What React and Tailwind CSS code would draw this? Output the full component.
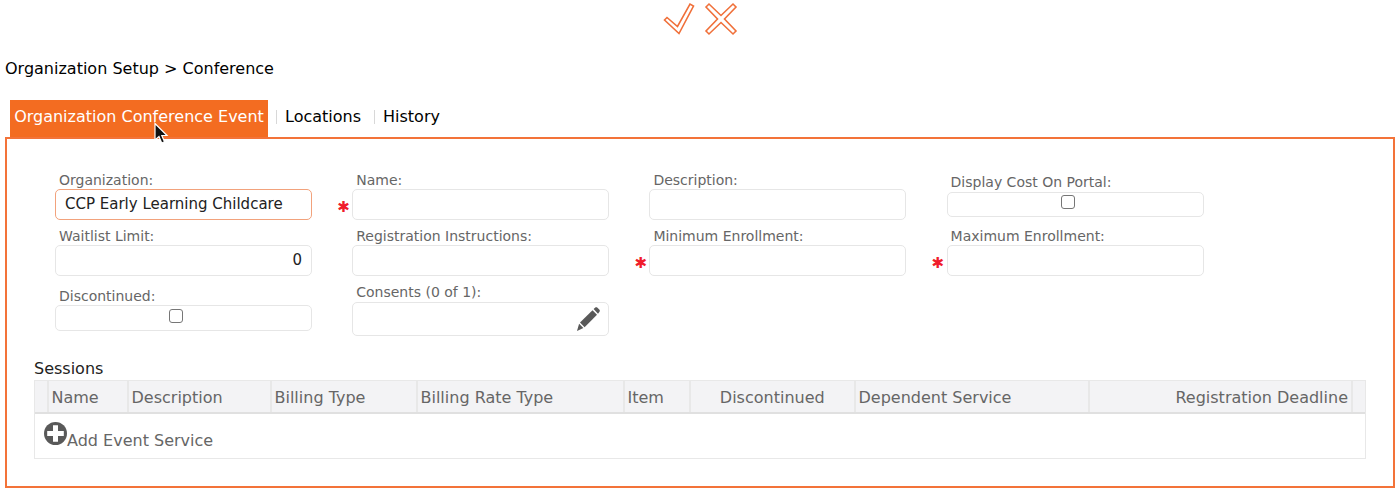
import React from "react";

const font = "font-['DejaVu_Sans',sans-serif]";

function Pencil() {
  return (
    <svg className="absolute right-[8px] top-[4px]" width="24" height="25" viewBox="0 0 24 25" fill="#595959">
      <path d="M4 15.5L16.5 3.2L21 7.8L8.6 20.2Z" />
      <path d="M17.6 2.1L19.3 0.5C19.9 0 20.6 0 21.2 0.5L23.5 2.8C24 3.4 24 4.1 23.5 4.7L22 6.7Z" />
      <path d="M3.1 16.7L7.4 21L1 24Z" />
    </svg>
  );
}

function PlusCircle() {
  return (
    <svg width="23" height="23" viewBox="0 0 23 23">
      <circle cx="11.5" cy="11.5" r="11.5" fill="#595959" />
      <path d="M9 3.2H14V9H19.8V14H14V19.8H9V14H3.2V9H9Z" fill="#ffffff" />
    </svg>
  );
}

function Label({ children, shift }) {
  return (
    <div className={`h-[18px] pl-[4px] text-[14px] leading-[16px] text-[#666666] ${shift ? "pt-[1px]" : ""}`}>
      {children}
    </div>
  );
}

function Field({ label, value, right, required, box = "h-[31px]", edge = "border-[#e6e6e6]", check, icon, bottom = "", shift }) {
  return (
    <div className={`relative flex flex-col ${bottom}`}>
      <Label shift={shift}>{label}</Label>
      <div className={`relative flex items-center rounded-[5px] border bg-white ${edge} ${box}`}>
        {value && (
          <span className={`w-full px-[9px] text-[15px] text-[#222222] ${right ? "text-right" : ""}`}>{value}</span>
        )}
        {check && (
          <span className="mb-[5px] ml-[113px] h-[14px] w-[14px] rounded-[3px] border border-[#767676] bg-white" />
        )}
        {icon && <Pencil />}
        {required && (
          <span className="absolute left-[-16px] top-[8px] text-[15px] font-bold leading-[18px] text-[#f01c2c]">✱</span>
        )}
      </div>
    </div>
  );
}

const columns = [
  { t: "Name", w: "w-[80px]" },
  { t: "Description", w: "w-[143px]" },
  { t: "Billing Type", w: "w-[146px]" },
  { t: "Billing Rate Type", w: "w-[207px]" },
  { t: "Item", w: "w-[66px]" },
  { t: "Discontinued", w: "w-[165px]", c: true },
  { t: "Dependent Service", w: "w-[234px]" },
  { t: "Registration Deadline", w: "w-[263px]", r: true },
];

export default function App() {
  return (
    <div className={`relative h-[501px] overflow-hidden bg-white ${font}`}>
      <div className="flex h-[38px] justify-center">
        <svg width="80" height="38" viewBox="660 0 80 38" fill="#ffffff" stroke="#f0703a" strokeWidth="1.6">
          <polygon points="664.5,20 667,17.5 677.5,26.5 690,4 693.5,6 679,33.5" />
          <polygon points="706,7 709,4 721,15.5 733,4 736,7 724.5,19 736,31 733,34 721,22.5 709,34 706,31 717.5,19" />
        </svg>
      </div>
      <div className="mt-[21px] h-[20px] pl-[5px] text-[16px] leading-[20px] text-black">Organization Setup &gt; Conference</div>
      <div className="mt-[21px] flex h-[38px] pl-[10px] text-[16px]">
        <div className="flex w-[258px] items-center justify-center bg-[#f36c21] pb-[4px] text-white">
          Organization Conference Event
        </div>
        <div className="ml-[8px] flex items-center pb-[4px] text-black">
          <span className="mr-[8px] h-[14px] w-[1px] bg-[#d8d8d8]" />
          Locations
        </div>
        <div className="ml-[13px] flex items-center pb-[4px] text-black">
          <span className="mr-[8px] h-[14px] w-[1px] bg-[#d8d8d8]" />
          History
        </div>
      </div>
      <div className="relative mx-[5px] -mt-[1px] h-[351px] border-2 border-[#f37339] bg-white pl-[48px] pr-[27px]">
        <div className="grid w-[1149px] grid-cols-[257px_257px_257px_257px] gap-x-[40.2px] pt-[32px]">
          <Field label="Organization:" value="CCP Early Learning Childcare" edge="border-[#f2a27c]" shift />
          <Field label="Name:" required shift />
          <Field label="Description:" shift />
          <Field label="Display Cost On Portal:" check box="h-[25px]" bottom="mt-[3px]" />
          <Field label="Waitlist Limit:" value="0" right bottom="mt-[7px]" shift />
          <Field label="Registration Instructions:" bottom="mt-[7px]" shift />
          <Field label="Minimum Enrollment:" required bottom="mt-[7px]" shift />
          <Field label="Maximum Enrollment:" required bottom="mt-[7px]" shift />
          <Field label="Discontinued:" check box="h-[26px] -mt-[1px]" bottom="mt-[12px]" />
          <Field label="Consents (0 of 1):" icon box="h-[34px]" bottom="mt-[8px]" />
        </div>
        <div className="-ml-[21px] mt-[23px] h-[20px] text-[16px] leading-[20px] text-[#222222]">Sessions</div>
        <div className="-ml-[21px] mt-[1px] w-[1332px] border border-[#e8e8e8]">
          <div className="flex h-[33px] border-b-2 border-[#e0e0e0] bg-[#f3f3f5] text-[16px] text-[#666666]">
            <div className="w-[14px] border-r-2 border-[#e8e8e8]" />
            {columns.map((c) => (
              <div
                key={c.t}
                className={`${c.w} flex items-center border-r-2 border-[#e8e8e8] pl-[2.5px] pr-[3px] pt-[2px] ${c.r ? "justify-end" : ""} ${c.c ? "justify-center" : ""}`}
              >
                {c.t}
              </div>
            ))}
          </div>
          <div className="flex h-[44px] items-start bg-white pl-[9px] pt-[8px] text-[16px] text-[#666666]">
            <PlusCircle />
            <span className="mt-[9px] leading-[20px]">Add Event Service</span>
          </div>
        </div>
      </div>
      <svg className="absolute left-[153px] top-[122px]" width="16" height="24" viewBox="0 0 16 24">
        <path d="M2 1.5V18L6 14.5L8.7 21L11.5 19.8L8.8 13.5H14Z" fill="#111111" stroke="#ffffff" strokeWidth="1.2" />
      </svg>
    </div>
  );
}
